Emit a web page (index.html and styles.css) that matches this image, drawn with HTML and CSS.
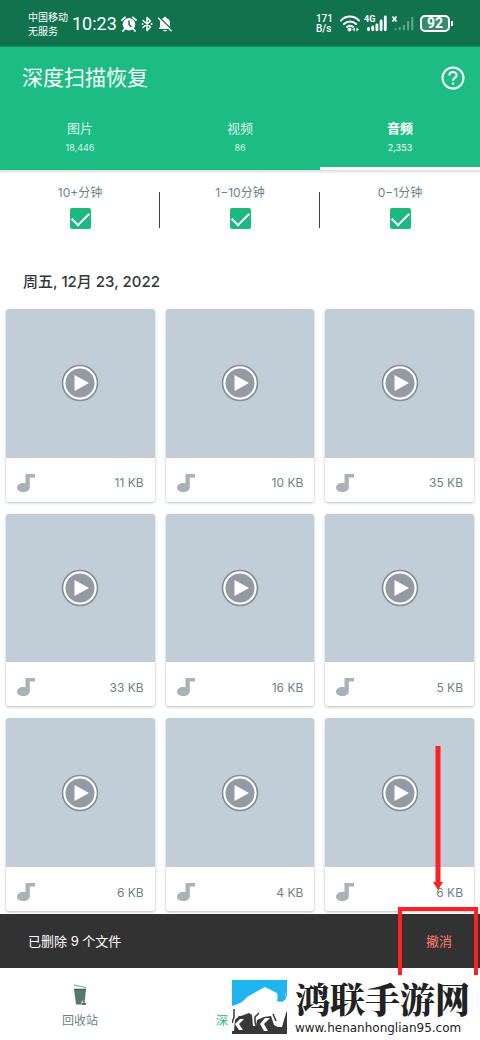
FILE: index.html
```html
<!DOCTYPE html>
<html lang="zh-CN">
<head>
<meta charset="utf-8">
<meta name="viewport" content="width=device-width, initial-scale=1">
<title>深度扫描恢复</title>
<link rel="stylesheet" href="styles.css">
</head>
<body>
<svg class="sprite" aria-hidden="true">
  <symbol id="play" viewBox="0 0 38 38">
    <circle cx="19" cy="19" r="18.300" fill="#858c91"/>
    <circle cx="19" cy="19" r="15.600" fill="#929ba3" stroke="#fff" stroke-width="2.200"/>
    <path d="M13.500 11v16L28 19z" fill="#fff"/>
  </symbol>
  <symbol id="note" viewBox="0 0 18 20">
    <path d="M8.500 1H18v3.400h-5.200V14c0 3.300-2.700 5-6.300 5S0 17.600 0 14.800s2.800-4.900 6-4.900c1 0 1.800.1 2.500.4z" fill="#a9b2b7"/>
  </symbol>
</svg>
<div class="screen">
  <div class="status">
    <div class="carrier"><span>中国移动</span><span>无服务</span></div>
    <time class="clock">10:23</time>
    <svg class="alarm" viewBox="0 0 16 16" width="16" height="16" fill="none" stroke="#fff">
      <circle cx="8" cy="8.300" r="6.200" fill="#fff" stroke="none"/>
      <path d="M1 4.200 4 1.300M15 4.200 12 1.300M3.600 13 2 15M12.400 13 14 15" stroke-width="1.800" stroke-linecap="round"/>
      <path d="M8 4.500v4l2.300 2.500" stroke="#11724e" stroke-width="1.500"/>
    </svg>
    <svg class="bluetooth" viewBox="0 0 12 16" width="12" height="16" fill="none" stroke="#fff" stroke-width="1.500" stroke-linejoin="round" stroke-linecap="round">
      <path d="m2 4.500 7.500 6.500L6 14.500v-13L9.500 5 2 11.500"/><path d="M1.500 8h.1M10.500 8h.1" stroke-width="2"/>
    </svg>
    <svg class="bell" viewBox="0 0 16 16" width="16" height="16">
      <path d="M8 0.800c.9 0 1.300.6 1.300 1.300C11.700 2.800 13 4.700 13 7v4l1.500 2h-13L3 11V7c0-2.300 1.300-4.200 3.700-4.900C6.700 1.400 7.100.8 8 .8zM6 14h4c-.4 1.800-3.600 1.800-4 0z" fill="#fff"/>
      <path d="M1.700.7 15.500 14.500" stroke="#11724e" stroke-width="1.600"/><path d="M1 1.800 14.500 15.300" stroke="#fff" stroke-width="1.400"/>
    </svg>
    <div class="speed"><span>171</span><span>B/s</span></div>
    <svg class="wifi" viewBox="0 0 20 17" width="20" height="17" fill="none" stroke="#fff" stroke-width="2" stroke-linecap="round">
      <path d="M1 5.500c5-5.300 13-5.300 18 0M4 9c3.500-3.500 8.500-3.500 12 0M7 12c2-1.600 4-1.600 6 0"/><circle cx="9.500" cy="14.500" r="2" fill="#fff" stroke="none"/>
      <path d="m12.300 14.500 2.500-2v4zM18.900 14.500l-2.500-2v4z" fill="#fff" stroke="none"/>
    </svg>
    <div class="signal">
      <svg viewBox="0 0 23 17" width="23" height="17" stroke="#fff" stroke-width="2.800" stroke-linecap="round">
        <path d="M4.500 13.500v1.300M8.700 12v2.800M12.900 10v4.800M17.100 6v8.800M21.300 2v12.800"/>
      </svg>
      <span class="network">4G</span>
    </div>
    <svg class="nosignal" viewBox="0 0 23 17" width="23" height="17" fill="none">
      <path d="m1.500 1.500 4 5m0-5-4 5" stroke="#fff" stroke-width="1.800"/>
      <path d="M4.500 13.500v1.800M8.700 12v3.300M12.900 10v5.300M17.100 6v9.300M21.300 2v13.300" stroke="#64a58d" stroke-width="2"/>
    </svg>
    <div class="battery">92</div>
  </div>

  <header class="header">
    <div class="titlebar">
      <h1>深度扫描恢复</h1>
      <button class="help" aria-label="帮助">
        <svg viewBox="0 0 24 24" width="24" height="24" fill="none" stroke="#fff" stroke-width="2">
          <circle cx="12" cy="12" r="10.500"/><path d="M8.300 9.500c0-4.700 7.300-4.500 7.300-.3 0 2.600-3.600 2.700-3.600 5.600"/><path d="M12 16.500v2.200"/>
        </svg>
      </button>
    </div>
    <nav class="tabs">
      <button class="tab"><span>图片</span><small>18,446</small></button>
      <button class="tab"><span>视频</span><small>86</small></button>
      <button class="tab active"><span>音频</span><small>2,353</small></button>
    </nav>
  </header>

  <div class="filters">
    <label class="filter">10+分钟<input type="checkbox" checked></label>
    <label class="filter">1−10分钟<input type="checkbox" checked></label>
    <label class="filter">0−1分钟<input type="checkbox" checked></label>
  </div>

  <main class="content">
    <h2>周五, 12月 23, 2022</h2>
    <div class="grid">
      <article class="card"><div class="thumb"><svg class="play"><use href="#play"/></svg></div><div class="meta"><svg class="note"><use href="#note"/></svg><span>11 KB</span></div></article>
      <article class="card"><div class="thumb"><svg class="play"><use href="#play"/></svg></div><div class="meta"><svg class="note"><use href="#note"/></svg><span>10 KB</span></div></article>
      <article class="card"><div class="thumb"><svg class="play"><use href="#play"/></svg></div><div class="meta"><svg class="note"><use href="#note"/></svg><span>35 KB</span></div></article>
      <article class="card"><div class="thumb"><svg class="play"><use href="#play"/></svg></div><div class="meta"><svg class="note"><use href="#note"/></svg><span>33 KB</span></div></article>
      <article class="card"><div class="thumb"><svg class="play"><use href="#play"/></svg></div><div class="meta"><svg class="note"><use href="#note"/></svg><span>16 KB</span></div></article>
      <article class="card"><div class="thumb"><svg class="play"><use href="#play"/></svg></div><div class="meta"><svg class="note"><use href="#note"/></svg><span>5 KB</span></div></article>
      <article class="card"><div class="thumb"><svg class="play"><use href="#play"/></svg></div><div class="meta"><svg class="note"><use href="#note"/></svg><span>6 KB</span></div></article>
      <article class="card"><div class="thumb"><svg class="play"><use href="#play"/></svg></div><div class="meta"><svg class="note"><use href="#note"/></svg><span>4 KB</span></div></article>
      <article class="card"><div class="thumb"><svg class="play"><use href="#play"/></svg></div><div class="meta"><svg class="note"><use href="#note"/></svg><span>6 KB</span></div></article>
    </div>
  </main>

  <div class="snackbar" role="status">
    <span>已删除 9 个文件</span>
    <button class="undo">撤消</button>
    <svg class="arrow" viewBox="0 0 10 144" width="10" height="144" fill="#fb2226" aria-hidden="true"><path d="M2.500 0h5v136H10l-5 8-5-8h2.500z"/></svg>
    <div class="frame"></div>
  </div>

  <footer class="bottom">
    <nav class="bottomnav">
      <button class="navitem">
        <svg viewBox="0 0 16 22" width="16" height="22">
          <path d="m2 1 12 2.500" stroke="#8b9793" stroke-width="1.200"/><path d="M2 5h12l-1.500 15.500H4z" fill="#56796f"/><path d="M2 5.500h12" stroke="#3f6158" stroke-width="1.500"/><circle cx="11.500" cy="18.500" r="2.300" fill="#c5cfcb"/><path d="M10 20h4M11 17.500h1.500" stroke="#414b48" stroke-width="1.500"/>
        </svg>
        <span>回收站</span>
      </button>
      <button class="navitem current"><span>深度扫描</span></button>
      <span></span>
    </nav>
    <div class="brand">
      <svg class="logo" viewBox="0 0 55 54" width="55" height="54">
        <path d="M0 0h55v54H0z" fill="#383838"/>
        <path d="M0 0h55v32H0z" fill="#20b5f0"/>
        <path d="M0 26c7-2 11-4 15-9L33 7l12 6 2 8 3 1 4-3-1-8 2 8v11l-3 10-2 7h-4l-4-2-3-9-7 1-7 3-1 6h-3l-1-11-3-2-8 3H7l-4 4-1 11H0z" fill="#fff"/>
        <path d="M49 9c4 5 3 8 0 8l-1 5-3-1 1-6 3-1z" fill="#20b5f0"/>
        <path d="M12 39H8l-5 5 4 6h4l-4-6zM38 38h-5l-5 6 4 7h4l-4-7z" fill="#fff"/>
        <path d="M2 29v8l-2 6M27 33l-4 4v5l2 7M41 34l3 7" fill="none" stroke="#383838" stroke-width="1.500"/>
      </svg>
      <div class="brandtext"><strong>鸿联手游网</strong><a href="#">www.henanhonglian95.com</a></div>
    </div>
  </footer>
</div>
</body>
</html>
```
FILE: styles.css
```css
* { box-sizing: border-box; }
body {
  margin: 0;
  background: #fff;
  color: #6f7f86;
  font-family: Inter, "Noto Sans CJK SC", sans-serif;
  font-size: 12px;
}
h1, h2 { margin: 0; }
button {
  border: 0;
  padding: 0;
  background: none;
  color: inherit;
  font: inherit;
}
.sprite { position: absolute; width: 0; height: 0; }
.screen { display: flex; flex-direction: column; min-height: 100vh; }

.status {
  display: flex;
  align-items: center;
  gap: 4px;
  height: 46px;
  padding: 1px 30px 0 28px;
  background: #11724e;
  color: #fff;
}
.carrier, .speed { display: flex; flex-direction: column; }
.carrier { font-size: 10px; line-height: 14px; }
.clock { font-family: Roboto, sans-serif; font-size: 18px; line-height: 24px; }
.speed {
  margin-left: auto;
  padding-right: 3px;
  font: 500 10px/10px Roboto, sans-serif;
}
.signal { position: relative; display: flex; }
.network { position: absolute; left: 0; top: 0; font: 700 9px/9px Roboto, sans-serif; }
.battery {
  position: relative;
  width: 30px;
  height: 17px;
  margin-left: 2px;
  border: 2px solid #fff;
  border-radius: 5px;
  background: #3c8a6e;
  font: 700 14px/13px Roboto, sans-serif;
  text-align: center;
}
.battery::after {
  content: "";
  position: absolute;
  right: -5px;
  top: 4px;
  width: 2px;
  height: 5px;
  background: #fff;
}

.header { background: #1cbc84; color: #fff; border-top: 1px solid #0f9566; }
.titlebar {
  display: flex;
  align-items: center;
  justify-content: space-between;
  height: 62px;
  padding: 0 15px 0 22px;
}
h1 { font-size: 21px; line-height: 30px; font-weight: 400; }
.help { display: flex; }
.tabs { display: grid; grid-template-columns: repeat(3, 1fr); }
.tab {
  display: flex;
  flex-direction: column;
  align-items: center;
  gap: 3px;
  height: 61px;
  padding-top: 9px;
  border-bottom: 3px solid transparent;
  color: #d9f4e9;
  font-size: 13px;
  line-height: 20px;
}
.tab small { font-size: 9px; line-height: 14px; }
.active { border-bottom-color: #fff; color: #fff; }
.active span { font-weight: 700; }

.filters {
  display: grid;
  grid-template-columns: repeat(3, 1fr);
  padding: 13px 0 10px;
  box-shadow: inset 0 4px 4px -3px #ccc;
}
.filter {
  position: relative;
  display: flex;
  flex-direction: column;
  align-items: center;
  gap: 5px;
  line-height: 20px;
}
.filter + .filter::before {
  content: "";
  position: absolute;
  left: -1px;
  top: 9px;
  width: 1px;
  height: 36px;
  background: #493f40;
}
.filter input {
  appearance: none;
  display: flex;
  justify-content: center;
  width: 21px;
  height: 21px;
  margin: 0;
  border-radius: 2px;
  background: #1cb983;
}
.filter input:checked::before {
  content: "";
  width: 15px;
  height: 8px;
  margin-top: 4px;
  border: solid #fff;
  border-width: 0 0 2px 2px;
  transform: rotate(-45deg);
}

.content { flex: 1; padding: 33px 6px 3px; }
h2 {
  padding: 0 17px;
  color: #30383b;
  font-size: 15px;
  line-height: 20px;
  font-weight: 500;
}
.grid {
  display: grid;
  grid-template-columns: repeat(3, 1fr);
  gap: 12px 11px;
  margin-top: 17px;
}
.card {
  overflow: hidden;
  border-radius: 3px;
  background: #fff;
  box-shadow: 0 1px 3px #b5bdc1;
}
.thumb {
  display: grid;
  place-items: center;
  aspect-ratio: 1;
  background: #c1cdd7;
}
.play { width: 38px; height: 38px; }
.meta {
  display: flex;
  align-items: center;
  justify-content: space-between;
  height: 44px;
  padding: 6px 11px 0;
}
.note { width: 18px; height: 20px; }

.snackbar {
  position: relative;
  display: flex;
  align-items: center;
  justify-content: space-between;
  height: 54px;
  padding: 0 28px 2px;
  background: #323232;
  color: #fff;
  font-size: 13px;
}
.undo { color: #ff7b70; }
.arrow { position: absolute; right: 37px; bottom: 78px; }
.frame {
  position: absolute;
  z-index: 2;
  top: -7px;
  right: 2px;
  width: 80px;
  height: 68px;
  border: 4px solid #fb2226;
  border-bottom: 0;
}

.bottom { position: relative; }
.bottomnav { display: grid; grid-template-columns: repeat(3, 1fr); height: 72px; }
.navitem {
  display: flex;
  flex-direction: column;
  align-items: center;
  justify-content: flex-end;
  gap: 5px;
  padding-bottom: 9px;
  line-height: 20px;
}
.current { color: #1cb983; }
.brand {
  position: absolute;
  right: 0;
  bottom: 0;
  display: flex;
  align-items: center;
  gap: 8px;
  height: 64px;
  padding: 0 10px 2px 3px;
  background: #fff;
  color: #222;
}
.brandtext { display: flex; flex-direction: column; gap: 2px; }
.brandtext strong { font: 900 35px/40px "Noto Serif CJK SC", "Noto Sans CJK SC", serif; }
.brandtext a { color: inherit; font: 12px/16px "DejaVu Sans", sans-serif; text-decoration: none; }
```
